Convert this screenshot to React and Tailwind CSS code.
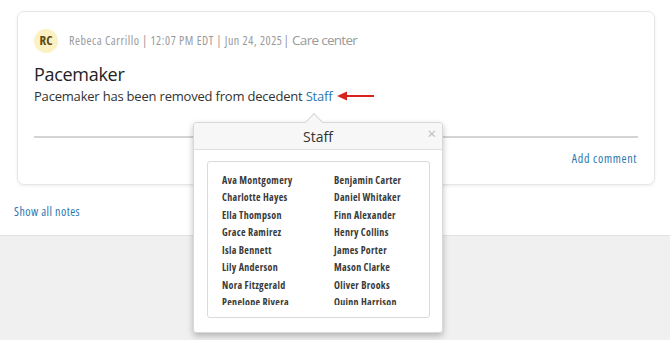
import React from "react";

const names = [
  ["Ava Montgomery", "Benjamin Carter"],
  ["Charlotte Hayes", "Daniel Whitaker"],
  ["Ella Thompson", "Finn Alexander"],
  ["Grace Ramirez", "Henry Collins"],
  ["Isla Bennett", "James Porter"],
  ["Lily Anderson", "Mason Clarke"],
  ["Nora Fitzgerald", "Oliver Brooks"],
  ["Penelope Rivera", "Quinn Harrison"],
  ["Ruby Sullivan", "Samuel Reed"],
];

export default function App() {
  return (
    <div className="relative w-[670px] h-[340px] overflow-hidden bg-[#f0f0f0] font-['Open_Sans','Liberation_Sans',sans-serif]">
      <div className="h-[236px] bg-white border-b border-[#e2e2e2] pt-[11px]">
        <div className="ml-[17px] w-[638px] h-[174px] rounded-[7px] border border-[#e6e6e6] shadow-[0_1px_3px_rgba(0,0,0,0.08)] px-4 pt-[17px]">
          <div className="flex items-center gap-[11px] h-6">
            <div className="w-6 h-6 rounded-full bg-[#fbf1c2] flex items-center justify-center text-[13px] font-bold text-[#5b4a12] font-stretch-condensed">
              RC
            </div>
            <div className="text-[#9a9a9a] text-[12px] leading-none">
              <span className="font-stretch-condensed tracking-[0.55px]">Rebeca Carrillo | 12:07 PM EDT | Jun 24, 2025</span>
              <span className="text-[13.5px] tracking-[-0.7px]">| Care center</span>
            </div>
          </div>
          <div className="mt-[9px] text-[18px] font-medium text-[#222] leading-[24px] tracking-[-0.3px]">Pacemaker</div>
          <div className="flex items-center text-[13px] text-[#333] leading-[22px] mt-[-1px] tracking-[-0.2px]">
            <span>Pacemaker has been removed from decedent&nbsp;</span>
            <span className="text-[#2a78b0]">Staff</span>
            <svg className="ml-[5px]" width="37" height="10" viewBox="0 0 37 10">
              <path d="M0 5 L10 0.5 L10 9.5 Z" fill="#d8241c" />
              <rect x="9" y="4" width="28" height="2" fill="#d8241c" />
            </svg>
          </div>
          <div className="mt-[29px] h-[2px] bg-[#d4d4d4]" />
          <div className="flex justify-end mt-[12px] pr-[1px]">
            <span className="text-[12px] text-[#2a78b0] font-stretch-condensed tracking-[0.7px]">Add comment</span>
          </div>
        </div>
        <div className="ml-[14px] mt-[21px] text-[12px] text-[#2a78b0] font-stretch-condensed tracking-[0.45px] leading-none">Show all notes</div>
      </div>

      <div className="absolute left-[193px] top-[122px] w-[250px] h-[211px] bg-white border border-[#d8d8d8] rounded-[3px] shadow-[0_3px_6px_rgba(0,0,0,0.25)]">
        <div className="absolute left-[113px] top-[-7px] w-[14px] h-[14px] rotate-45 bg-[#f7f7f7] border-l border-t border-[#d8d8d8]" />
        <div className="relative h-[27px] bg-[#f7f7f7] border-b border-[#e0e0e0] rounded-t-[3px] flex items-center justify-center text-[14px] text-[#333]">
          Staff
          <span className="absolute right-[6px] top-[3px] text-[15px] text-[#bbb] leading-none">×</span>
        </div>
        <div className="mx-[13px] mt-[11px] w-[223px] h-[157px] border border-[#dadada] rounded-[3px] pt-[9px] pl-[14px]">
          <div className="h-[134px] overflow-hidden">
            {names.map(([a, b]) => (
              <div key={a} className="grid grid-cols-[112px_1fr] h-[17.5px] items-center text-[10px] font-bold text-[#3a3a3a] font-stretch-condensed tracking-[0.3px] leading-none">
                <span>{a}</span>
                <span>{b}</span>
              </div>
            ))}
          </div>
        </div>
      </div>
    </div>
  );
}
